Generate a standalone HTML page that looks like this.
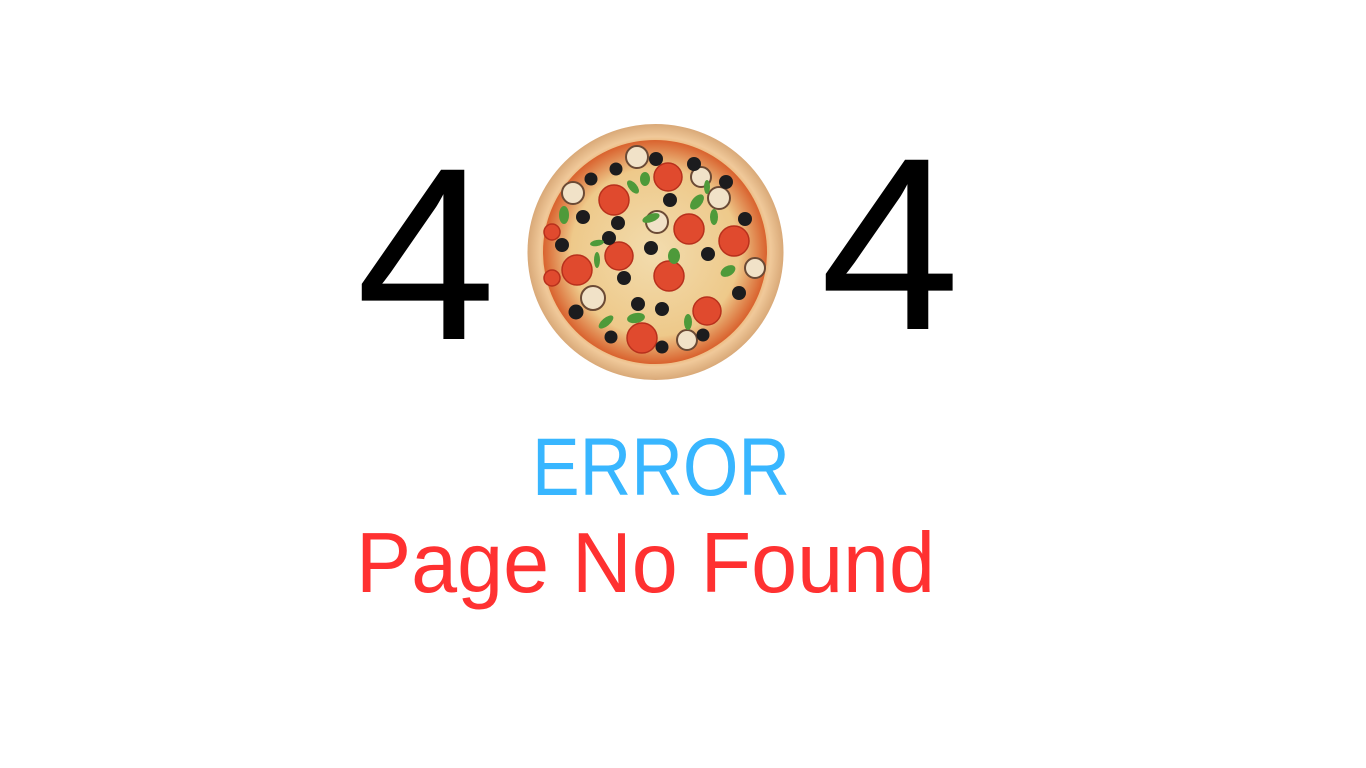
<!DOCTYPE html>
<html><head><meta charset="utf-8"><style>
html,body{margin:0;padding:0;background:#fff;width:1366px;height:768px;overflow:hidden}
svg{position:absolute;left:0;top:0}
text{font-family:"Liberation Sans",sans-serif}
</style></head><body>
<svg width="1366" height="768" viewBox="0 0 1366 768">
<defs>
<radialGradient id="crust" cx="50%" cy="50%" r="50%">
<stop offset="0.82" stop-color="#e8a860"/><stop offset="0.9" stop-color="#f0c99a"/><stop offset="1" stop-color="#d9a978"/>
</radialGradient>
<radialGradient id="cheese" cx="50%" cy="50%" r="50%">
<stop offset="0" stop-color="#f2dcae"/><stop offset="0.75" stop-color="#eec98a"/><stop offset="1" stop-color="#d9622e"/>
</radialGradient>
</defs>
<text x="356" y="339" font-size="246" textLength="140" lengthAdjust="spacingAndGlyphs">4</text>
<text x="820" y="329" font-size="246" textLength="140" lengthAdjust="spacingAndGlyphs">4</text>
<circle cx="655.5" cy="252" r="128" fill="url(#crust)"/>
<circle cx="655" cy="252" r="112" fill="url(#cheese)"/>
<g fill="#e04a2e" stroke="#b8301c" stroke-width="1.5">
<circle cx="614" cy="200" r="15"/><circle cx="668" cy="177" r="14"/><circle cx="689" cy="229" r="15"/><circle cx="734" cy="241" r="15"/><circle cx="619" cy="256" r="14"/><circle cx="577" cy="270" r="15"/><circle cx="669" cy="276" r="15"/><circle cx="707" cy="311" r="14"/><circle cx="642" cy="338" r="15"/><circle cx="552" cy="232" r="8"/><circle cx="552" cy="278" r="8"/>
</g>
<g fill="#f1e2c8" stroke="#6b4a35" stroke-width="2">
<circle cx="573" cy="193" r="11"/><circle cx="637" cy="157" r="11"/><circle cx="701" cy="177" r="10"/><circle cx="719" cy="198" r="11"/><circle cx="657" cy="222" r="11"/><circle cx="755" cy="268" r="10"/><circle cx="593" cy="298" r="12"/><circle cx="687" cy="340" r="10"/>
</g>
<g fill="#1c1c1e">
<circle cx="656" cy="159" r="7"/><circle cx="694" cy="164" r="7"/><circle cx="616" cy="169" r="6.5"/><circle cx="591" cy="179" r="6.5"/><circle cx="726" cy="182" r="7"/><circle cx="670" cy="200" r="7"/><circle cx="583" cy="217" r="7"/><circle cx="618" cy="223" r="7"/><circle cx="745" cy="219" r="7"/><circle cx="609" cy="238" r="7"/><circle cx="562" cy="245" r="7"/><circle cx="651" cy="248" r="7"/><circle cx="708" cy="254" r="7"/><circle cx="624" cy="278" r="7"/><circle cx="739" cy="293" r="7"/><circle cx="638" cy="304" r="7"/><circle cx="662" cy="309" r="7"/><circle cx="576" cy="312" r="7.5"/><circle cx="703" cy="335" r="6.5"/><circle cx="611" cy="337" r="6.5"/><circle cx="662" cy="347" r="6.5"/>
</g>
<g fill="#4e9a3a">
<ellipse cx="564" cy="215" rx="5" ry="9"/><ellipse cx="645" cy="179" rx="5" ry="7"/><ellipse cx="633" cy="187" rx="4" ry="8" transform="rotate(-40 633 187)"/><ellipse cx="651" cy="218" rx="4" ry="9" transform="rotate(70 651 218)"/><ellipse cx="714" cy="217" rx="4" ry="8"/><ellipse cx="697" cy="202" rx="5" ry="9" transform="rotate(40 697 202)"/><ellipse cx="597" cy="260" rx="3" ry="8"/><ellipse cx="674" cy="256" rx="6" ry="8"/><ellipse cx="606" cy="322" rx="4" ry="9" transform="rotate(50 606 322)"/><ellipse cx="636" cy="318" rx="5" ry="9" transform="rotate(80 636 318)"/><ellipse cx="728" cy="271" rx="5" ry="8" transform="rotate(60 728 271)"/><ellipse cx="688" cy="322" rx="4" ry="8"/><ellipse cx="597" cy="243" rx="3" ry="7" transform="rotate(80 597 243)"/><ellipse cx="707" cy="187" rx="3" ry="7"/>
</g>
<text x="532" y="495" font-size="82" fill="#38b6ff" textLength="258" lengthAdjust="spacingAndGlyphs">ERROR</text>
<text x="356" y="592" font-size="85" fill="#ff3131" textLength="579" lengthAdjust="spacingAndGlyphs">Page No Found</text>
</svg>
</body></html>
